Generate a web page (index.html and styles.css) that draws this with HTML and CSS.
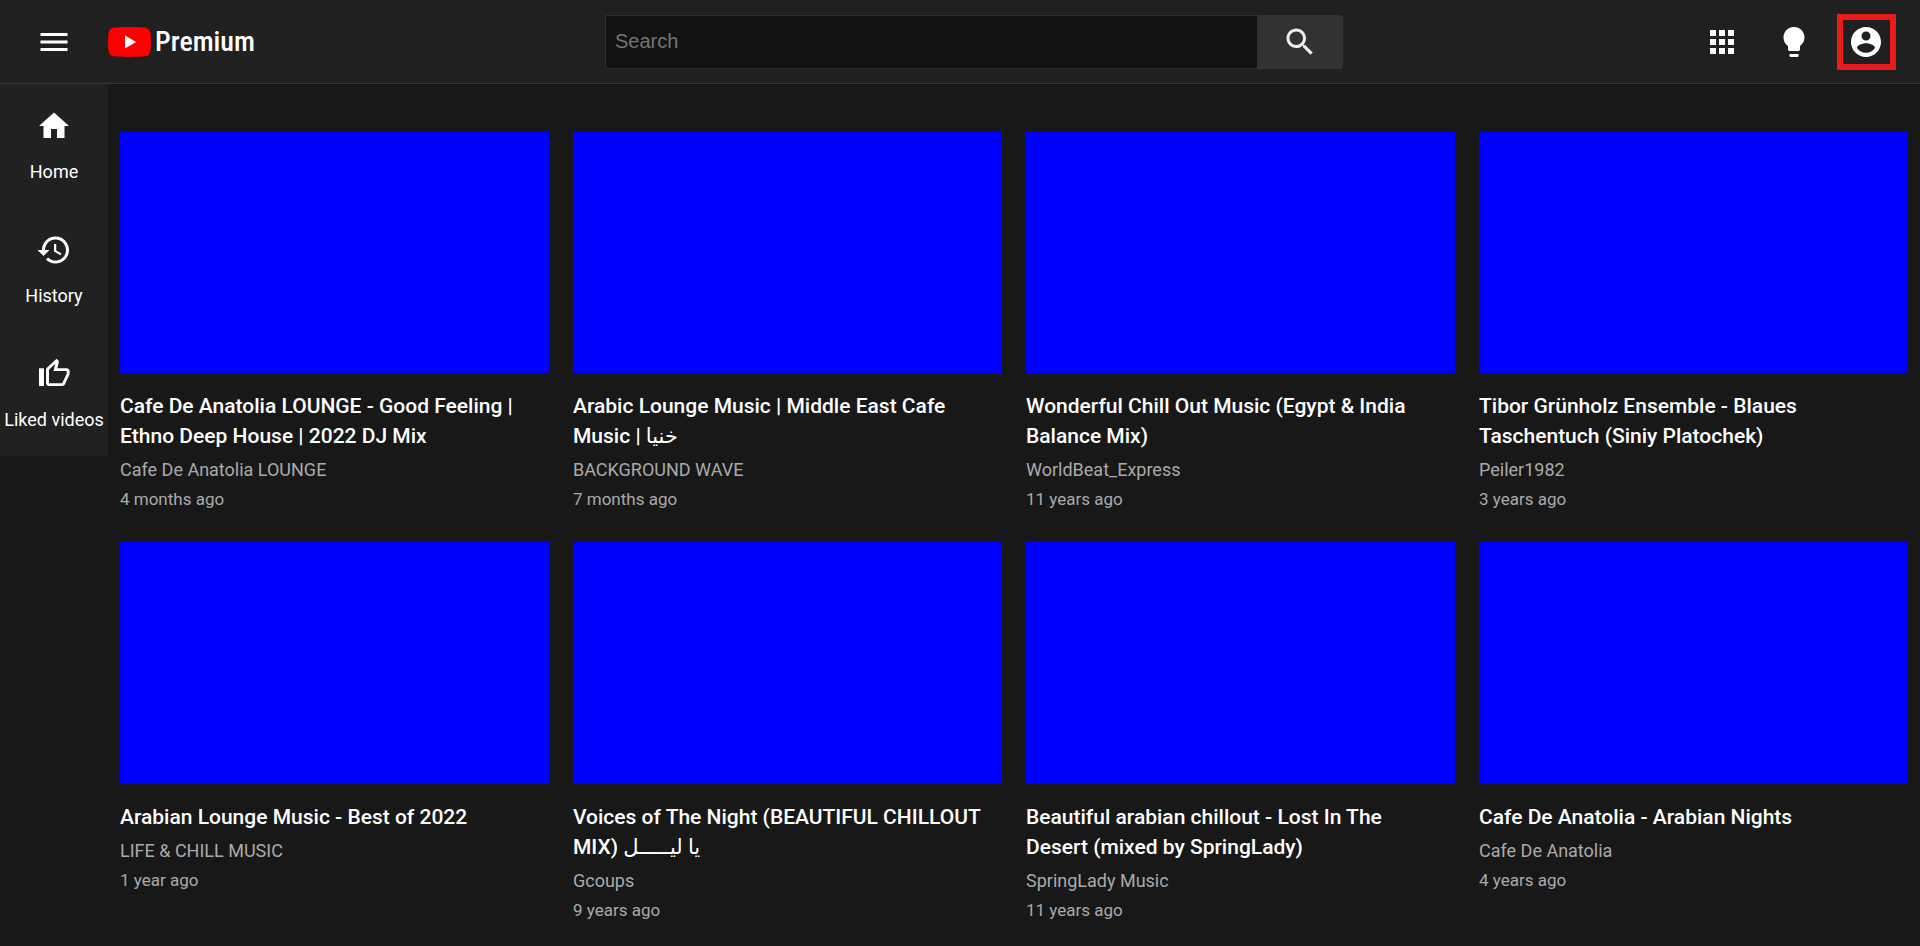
FILE: index.html
```html
<!DOCTYPE html>
<html lang="en">
<head>
<meta charset="utf-8">
<meta name="viewport" content="width=device-width, initial-scale=1">
<title>Premium</title>
<link rel="stylesheet" href="styles.css">
</head>
<body>
<header class="header">
  <div class="header-left">
    <button class="icon-button" type="button" aria-label="Menu">
      <svg class="icon" viewBox="0 0 24 24"><path d="M3 18h18v-2H3v2zm0-5h18v-2H3v2zm0-7v2h18V6H3z"/></svg>
    </button>
    <a class="logo" href="#">
      <svg class="logo-mark" viewBox="0 0 43 30" aria-hidden="true"><path fill="#f00" d="M42.1 4.7A5.4 5.4 0 0 0 38.300 .9C34.900 0 21.500 0 21.500 0S8.100 0 4.700 .9A5.400 5.400 0 0 0 .9 4.700C0 8 0 15 0 15s0 7 .9 10.300a5.400 5.400 0 0 0 3.800 3.800C8.100 30 21.500 30 21.500 30s13.400 0 16.800-.9a5.400 5.400 0 0 0 3.800-3.800C43 22 43 15 43 15s0-7-.9-10.300z"/><path fill="#fff" d="M17 21.400 28.100 15 17 8.600z"/></svg>
      <span class="logo-text">Premium</span>
    </a>
  </div>
  <form class="search" role="search">
    <input class="search-input" type="text" placeholder="Search" aria-label="Search">
    <button class="search-button" type="button" aria-label="Submit search">
      <svg class="icon" viewBox="0 0 24 24"><path d="M15.500 14h-.79l-.28-.27C15.410 12.590 16 11.110 16 9.500 16 5.910 13.090 3 9.500 3S3 5.910 3 9.500 5.910 16 9.500 16c1.610 0 3.090-.59 4.230-1.570l.27.28v.79l5 4.990L20.490 19l-4.990-5zm-6 0C7.010 14 5 11.990 5 9.500S7.010 5 9.500 5 14 7.010 14 9.500 11.990 14 9.500 14z"/></svg>
    </button>
  </form>
  <div class="header-right">
    <button class="icon-button" type="button" aria-label="Apps">
      <svg class="icon" viewBox="0 0 24 24"><path d="M4 8h4V4H4v4zm6 12h4v-4h-4v4zm-6 0h4v-4H4v4zm0-6h4v-4H4v4zm6 0h4v-4h-4v4zm6-10v4h4V4h-4zm-6 4h4V4h-4v4zm6 6h4v-4h-4v4zm0 6h4v-4h-4v4z"/></svg>
    </button>
    <button class="icon-button" type="button" aria-label="Toggle theme">
      <svg class="icon" viewBox="0 0 24 24"><path d="M9.500 22h5c.3 0 .5-.3.5-.6V20H9v1.400c0 .3.2.6.5.6zM12 2C8.100 2 5 5.100 5 9c0 2.400 1.200 4.500 3 5.700V17c0 .5.4 1 1 1h6c.6 0 1-.5 1-1v-2.300c1.800-1.300 3-3.400 3-5.700 0-3.900-3.100-7-7-7z"/></svg>
    </button>
    <button class="icon-button account" type="button" aria-label="Account">
      <svg class="icon" viewBox="0 0 24 24"><path d="M12 2C6.480 2 2 6.480 2 12s4.480 10 10 10 10-4.480 10-10S17.520 2 12 2zm0 3c1.660 0 3 1.340 3 3s-1.340 3-3 3-3-1.340-3-3 1.340-3 3-3zm0 14.200c-2.500 0-4.710-1.280-6-3.220.03-1.990 4-3.080 6-3.080 1.990 0 5.970 1.090 6 3.080-1.290 1.940-3.500 3.220-6 3.220z"/></svg>
    </button>
  </div>
</header>
<div class="layout">
  <nav class="sidebar" aria-label="Main">
    <a class="nav-item" href="#">
      <svg class="icon" viewBox="0 0 24 24"><path d="M10 20v-6h4v6h5v-8h3L12 3 2 12h3v8z"/></svg>
      <span>Home</span>
    </a>
    <a class="nav-item" href="#">
      <svg class="icon" viewBox="0 0 24 24"><path d="M13 3c-4.970 0-9 4.030-9 9H1l3.890 3.890.07.14L9 12H6c0-3.870 3.130-7 7-7s7 3.130 7 7-3.130 7-7 7c-1.930 0-3.680-.79-4.940-2.060l-1.420 1.420C8.270 19.990 10.510 21 13 21c4.970 0 9-4.030 9-9s-4.030-9-9-9zm-1 5v5l4.280 2.540.72-1.210-3.500-2.080V8H12z"/></svg>
      <span>History</span>
    </a>
    <a class="nav-item" href="#">
      <svg class="icon" viewBox="0 0 24 24"><path d="M2 8.200h3.300V20H2z"/><path transform="matrix(.98 0 0 .905 -.15 1)" d="M9 21h9c.83 0 1.540-.5 1.840-1.220l3.020-7.050c.09-.23.14-.47.14-.73v-2c0-1.100-.9-2-2-2h-6.310l.95-4.570.03-.32c0-.41-.17-.79-.44-1.060L14.170 1 7.580 7.590C7.220 7.950 7 8.450 7 9v10c0 1.100.9 2 2 2zM9 9l4.340-4.340L12 10h9v2l-3 7H9V9z"/></svg>
      <span>Liked videos</span>
    </a>
  </nav>
  <main class="videos">
    <article class="card">
      <div class="thumb"></div>
      <h2 class="title">Cafe De Anatolia LOUNGE - Good Feeling | Ethno Deep House | 2022 DJ Mix</h2>
      <p class="channel">Cafe De Anatolia LOUNGE</p>
      <p class="date">4 months ago</p>
    </article>
    <article class="card">
      <div class="thumb"></div>
      <h2 class="title">Arabic Lounge Music | Middle East Cafe Music | خنيا</h2>
      <p class="channel">BACKGROUND WAVE</p>
      <p class="date">7 months ago</p>
    </article>
    <article class="card">
      <div class="thumb"></div>
      <h2 class="title">Wonderful Chill Out Music (Egypt &amp; India Balance Mix)</h2>
      <p class="channel">WorldBeat_Express</p>
      <p class="date">11 years ago</p>
    </article>
    <article class="card">
      <div class="thumb"></div>
      <h2 class="title">Tibor Grünholz Ensemble - Blaues Taschentuch (Siniy Platochek)</h2>
      <p class="channel">Peiler1982</p>
      <p class="date">3 years ago</p>
    </article>
    <article class="card">
      <div class="thumb"></div>
      <h2 class="title">Arabian Lounge Music - Best of 2022</h2>
      <p class="channel">LIFE &amp; CHILL MUSIC</p>
      <p class="date">1 year ago</p>
    </article>
    <article class="card">
      <div class="thumb"></div>
      <h2 class="title">Voices of The Night (BEAUTIFUL CHILLOUT MIX) يا ليـــــل</h2>
      <p class="channel">Gcoups</p>
      <p class="date">9 years ago</p>
    </article>
    <article class="card">
      <div class="thumb"></div>
      <h2 class="title">Beautiful arabian chillout - Lost In The Desert (mixed by SpringLady)</h2>
      <p class="channel">SpringLady Music</p>
      <p class="date">11 years ago</p>
    </article>
    <article class="card">
      <div class="thumb"></div>
      <h2 class="title">Cafe De Anatolia - Arabian Nights</h2>
      <p class="channel">Cafe De Anatolia</p>
      <p class="date">4 years ago</p>
    </article>
  </main>
</div>
</body>
</html>
```
FILE: styles.css
```css
* {
  box-sizing: border-box;
}

body {
  margin: 0;
  background: #181818;
  color: #fff;
  font-family: Roboto, "DejaVu Sans", sans-serif;
}

button {
  margin: 0;
  padding: 0;
  border: 0;
  background: none;
  color: inherit;
  cursor: pointer;
}

a {
  color: inherit;
  text-decoration: none;
}

.icon {
  display: block;
  width: 36px;
  height: 36px;
  fill: currentColor;
}

.header {
  display: flex;
  align-items: center;
  justify-content: space-between;
  height: 84px;
  padding: 0 18px;
  background: #202020;
  border-bottom: 1px solid #373737;
}

.header-left,
.header-right {
  display: flex;
  align-items: center;
}

.header-left {
  gap: 18px;
  min-width: 244px;
}

.icon-button {
  display: flex;
  justify-content: center;
  width: 72px;
  padding: 10px 0;
}

.account {
  width: 59px;
  margin: 0 6px 0 7px;
  padding: 4px 6px 4px 5px;
  border: 6px solid #e71d1d;
}

.logo {
  display: flex;
  align-items: center;
  gap: 4px;
}

.logo-mark {
  width: 43px;
  height: 30px;
}

.logo-text {
  font: 500 28px/32px "Liberation Sans Narrow", "Roboto Condensed", "Open Sans Condensed", sans-serif;
}

.search {
  display: flex;
  flex: 0 1 738px;
  height: 54px;
}

.search-input {
  flex: 1;
  min-width: 0;
  padding: 0 9px;
  border: 1px solid #303030;
  border-right: 0;
  border-radius: 2px 0 0 2px;
  background: #121212;
  color: #fff;
  font: 20px "Liberation Sans", sans-serif;
}

.search-input::placeholder {
  color: #757575;
}

.search-button {
  display: flex;
  align-items: center;
  justify-content: center;
  width: 86px;
  border-radius: 0 3px 3px 0;
  background: #323232;
  color: #eee;
}

.layout {
  display: flex;
  align-items: flex-start;
}

.sidebar {
  flex: 0 0 108px;
  background: #212121;
}

.nav-item {
  display: flex;
  flex-direction: column;
  align-items: center;
  gap: 14px;
  padding: 24px 0 22px;
  font-size: 18px;
  line-height: 28px;
  white-space: nowrap;
}

.videos {
  flex: 1;
  display: grid;
  grid-template-columns: repeat(4, minmax(0, 1fr));
  gap: 29px 24px;
  padding: 48px 12px 12px;
}

.thumb {
  aspect-ratio: 16 / 9;
  background: #00f;
}

.title,
.channel,
.date {
  margin: 0;
  line-height: 30px;
}

.title {
  margin: 18px 0 4px;
  padding-right: 12px;
  font-size: 21px;
  font-weight: 500;
}

.channel,
.date {
  color: #aaa;
}

.channel {
  font-size: 18px;
}

.date {
  font-size: 17px;
  line-height: 28px;
}
```
